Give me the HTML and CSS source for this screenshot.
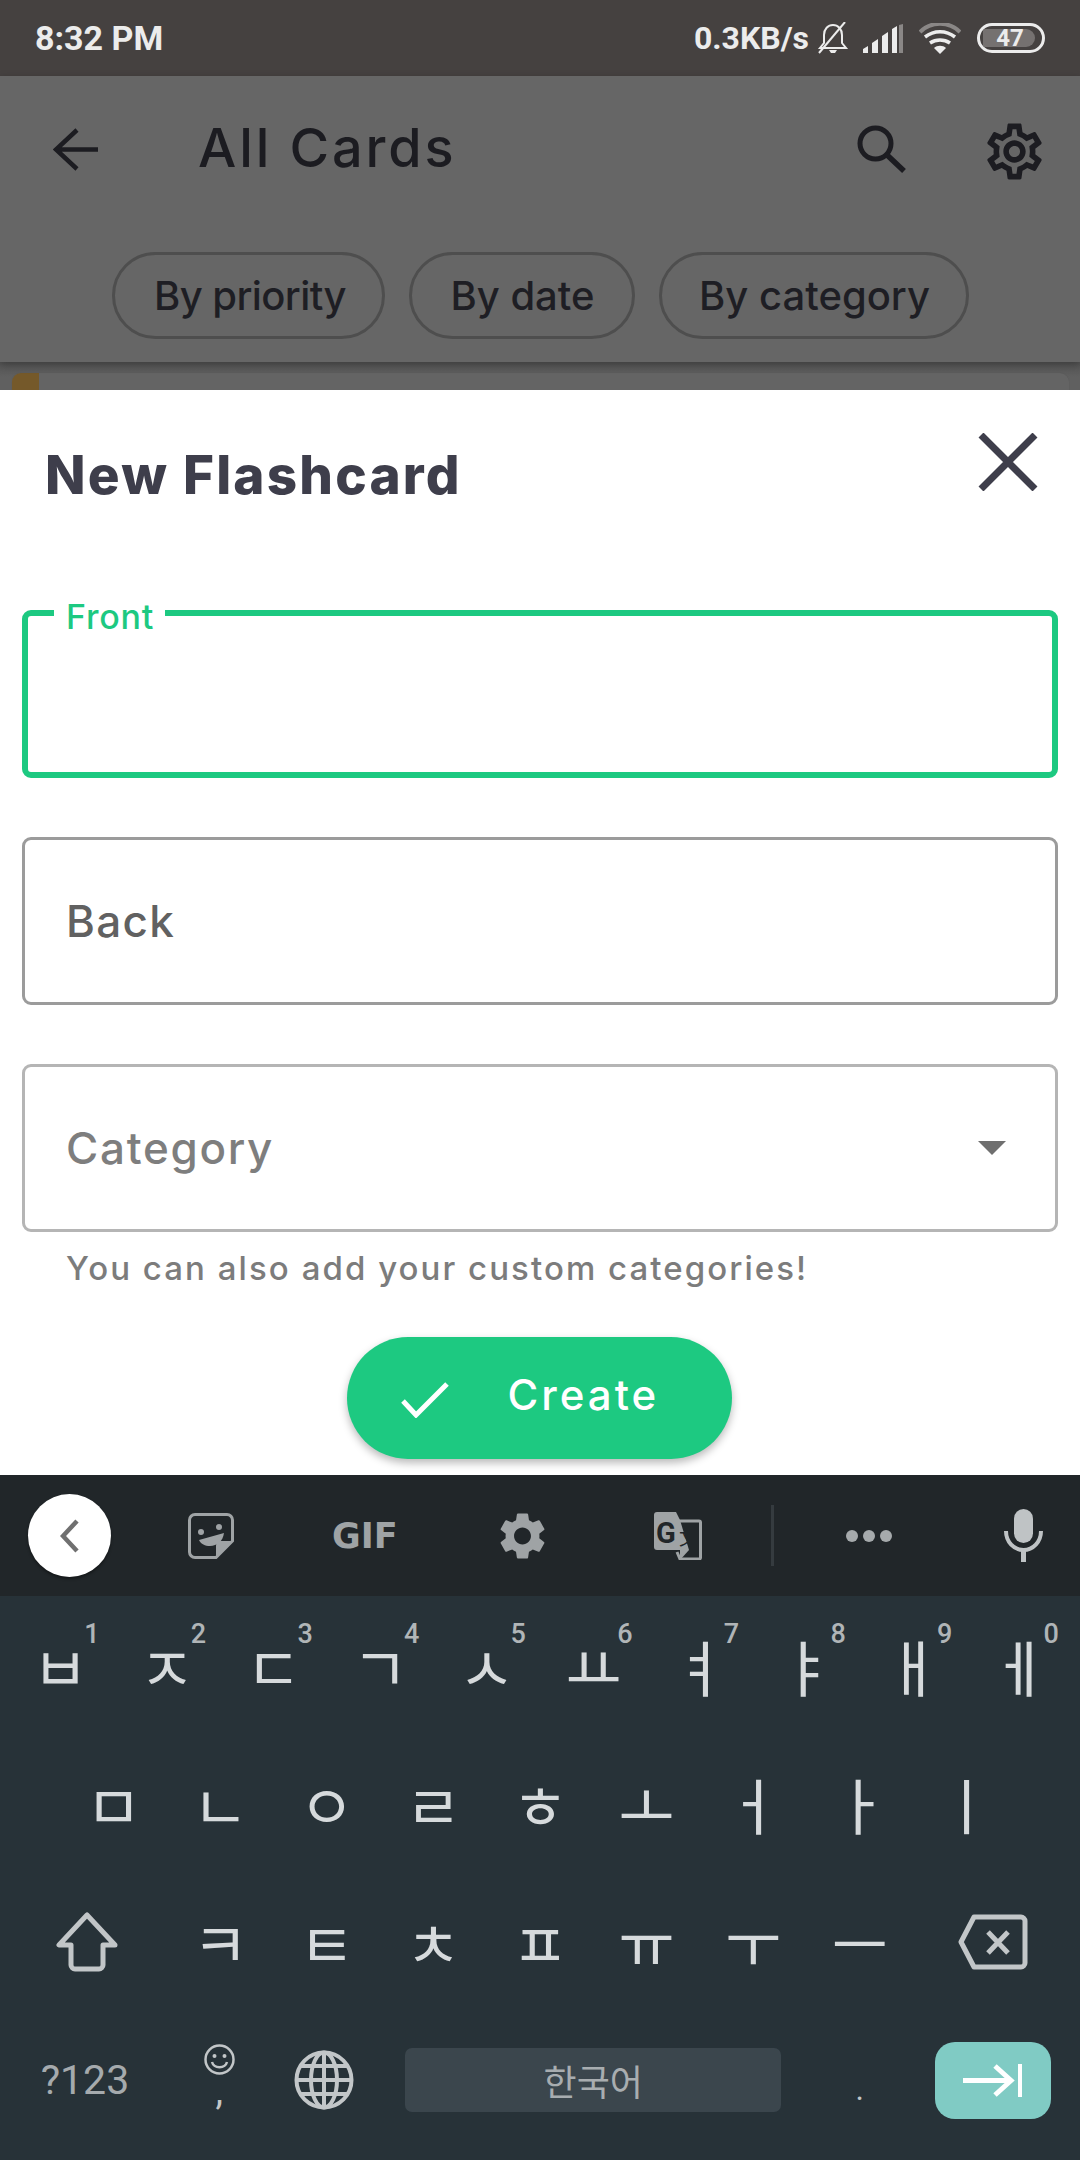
FILE: index.html
```html
<!DOCTYPE html>
<html lang="en">
<head>
<meta charset="utf-8">
<title>New Flashcard</title>
<link rel="stylesheet" href="styles.css">
</head>
<body>
<div class="screen">
  <header class="status">
    <span class="clock">8:32 PM</span>
    <div class="status-right">
      <span class="speed">0.3KB/s</span>
      <svg class="ic-bell" viewBox="0 0 32 32"><path d="M3 26h26l-4-5v-8c0-6-4-10-9-10s-9 4-9 10v8z" fill="none" stroke="#ececec" stroke-width="2"/><path d="M12 28h8l-2 3h-4z" fill="#ececec"/><path d="M2 31 28 0" stroke="#ececec" stroke-width="2"/></svg>
      <svg class="ic-signal" viewBox="0 0 40 29"><path d="M0 29v-4l5-3v7zM9 29v-10l6-4v14zM19 29v-17l6-4v21zM29 29v-24l5-3v27z" fill="#ececec"/><path d="M36 29v-28l4-1v29z" fill="#8a8786"/></svg>
      <svg class="ic-wifi" viewBox="0 0 42 31"><path d="M1 9c11-11 29-11 40 0" fill="none" stroke="#8a8786" stroke-width="4"/><path d="M6 14c9-7 21-7 30 0M11 20c6-4 14-4 20 0" fill="none" stroke="#ececec" stroke-width="3.500"/><path d="M21 31l-6-6c3-3 9-3 12 0z" fill="#ececec"/></svg>
      <div class="battery"><span class="battery-level"></span><span class="battery-num">47</span></div>
    </div>
  </header>

  <section class="appbar">
    <div class="appbar-top">
      <svg class="ic-back" viewBox="0 0 45 43"><path d="M24 2 3 21.500 24 41M3 21.500h42" fill="none" stroke="#1c1c21" stroke-width="4.500"/></svg>
      <h2 class="appbar-title">All Cards</h2>
      <svg class="ic-search" viewBox="0 0 49 48"><circle cx="18.500" cy="18.500" r="15.500" fill="none" stroke="#1c1c21" stroke-width="5"/><path d="M29 29 47 46" stroke="#1c1c21" stroke-width="5.500"/></svg>
      <svg class="ic-gear" viewBox="0 0 24 24"><path fill="#1c1c21" d="M19.430 12.980c.04-.32.07-.64.07-.98 0-.34-.03-.66-.07-.98l2.110-1.650c.19-.15.24-.42.12-.64l-2-3.460c-.09-.16-.26-.25-.44-.25-.06 0-.12.01-.17.03l-2.490 1c-.52-.4-1.080-.73-1.690-.98l-.38-2.650C14.460 2.180 14.250 2 14 2h-4c-.25 0-.46.18-.49.42l-.38 2.650c-.61.25-1.170.59-1.690.98l-2.490-1c-.06-.02-.12-.03-.18-.03-.17 0-.34.09-.43.25l-2 3.460c-.13.22-.07.49.12.64l2.110 1.650c-.04.32-.07.65-.07.98 0 .33.03.66.07.98l-2.110 1.650c-.19.15-.24.42-.12.64l2 3.460c.09.16.26.25.44.25.06 0 .12-.01.17-.03l2.490-1c.52.4 1.080.73 1.690.98l.38 2.650c.03.24.24.42.49.42h4c.25 0 .46-.18.49-.42l.38-2.650c.61-.25 1.170-.59 1.690-.98l2.490 1c.06.02.12.03.18.03.17 0 .34-.09.43-.25l2-3.460c.12-.22.07-.49-.12-.64l-2.110-1.650zm-1.980-1.710c.04.31.05.52.05.73 0 .21-.02.43-.05.73l-.14 1.130.89.7 1.080.84-.7 1.210-1.270-.51-1.040-.42-.9.68c-.43.32-.84.56-1.250.73l-1.060.43-.16 1.130-.2 1.350h-1.400l-.19-1.350-.16-1.130-1.060-.43c-.43-.18-.83-.41-1.230-.71l-.91-.7-1.060.43-1.270.51-.7-1.210 1.080-.84.89-.7-.14-1.130c-.03-.31-.05-.54-.05-.74s.02-.43.05-.73l.14-1.130-.89-.7-1.080-.84.7-1.210 1.270.51 1.040.42.9-.68c.43-.32.84-.56 1.250-.73l1.060-.43.16-1.130.2-1.350h1.390l.19 1.350.16 1.130 1.060.43c.43.18.83.41 1.230.71l.91.7 1.060-.43 1.270-.51.7 1.210-1.070.85-.89.7.14 1.130zM12 8c-2.210 0-4 1.790-4 4s1.790 4 4 4 4-1.790 4-4-1.790-4-4-4zm0 6c-1.100 0-2-.9-2-2s.9-2 2-2 2 .9 2 2-.9 2-2 2z"/></svg>
    </div>
    <div class="chips">
      <span class="chip chip-priority">By priority</span>
      <span class="chip chip-date">By date</span>
      <span class="chip chip-category">By category</span>
    </div>
  </section>

  <div class="peek"><div class="peek-card"><span class="peek-strip"></span></div></div>

  <main class="sheet">
    <div class="sheet-head">
      <h1 class="sheet-title">New Flashcard</h1>
      <svg class="ic-close" viewBox="0 0 60 58"><path d="M3 2 57 56M57 2 3 56" stroke="#3e3e4b" stroke-width="7"/></svg>
    </div>
    <div class="field field-active"><span class="field-label">Front</span></div>
    <div class="field field-back"><span class="field-text">Back</span></div>
    <div class="field field-select">
      <span class="field-text field-text-muted">Category</span>
      <span class="arrow"></span>
    </div>
    <p class="helper">You can also add your custom categories!</p>
    <div class="create">
      <svg class="ic-check" viewBox="0 0 48 36"><path d="M2 19 15 33 46 2" fill="none" stroke="#fff" stroke-width="5"/></svg>
      <span class="create-text">Create</span>
    </div>
  </main>

  <nav class="kb-tools">
    <div class="kb-collapse"><svg viewBox="0 0 20 34" class="ic-chev"><path d="M17 2 3 17 17 32" fill="none" stroke="#707070" stroke-width="4.500"/></svg></div>
    <svg class="ic-sticker" viewBox="0 0 46 46"><path d="M7 1.500h32c3 0 5.500 2.500 5.500 5.500v21L28 44.500H7c-3 0-5.500-2.500-5.500-5.500V7C1.500 4 4 1.500 7 1.500z" fill="none" stroke="#9fa3a5" stroke-width="3"/><path d="M44 28H33c-3 0-5 2-5 5v11z" fill="#9fa3a5"/><circle cx="13" cy="19" r="3" fill="#9fa3a5"/><circle cx="31" cy="14" r="3" fill="#9fa3a5"/><path d="M11 27l25-7c-1 8-7 13-14 13-5 0-9-2-11-6z" fill="#9fa3a5"/></svg>
    <span class="kb-gif">GIF</span>
    <svg class="ic-kbgear" viewBox="2 2 20 20"><path fill="#9fa3a5" d="M19.140 12.940c.04-.3.06-.61.06-.94 0-.32-.02-.64-.07-.94l2.030-1.580c.18-.14.23-.41.12-.61l-1.920-3.320c-.12-.22-.37-.29-.59-.22l-2.390.96c-.5-.38-1.030-.7-1.620-.94l-.36-2.540c-.04-.24-.24-.41-.48-.41h-3.840c-.24 0-.43.17-.47.41l-.36 2.540c-.59.24-1.130.57-1.620.94l-2.390-.96c-.22-.08-.47 0-.59.22L2.740 8.870c-.12.21-.08.47.12.61l2.030 1.580c-.05.3-.09.63-.09.94s.02.64.07.94l-2.030 1.580c-.18.14-.23.41-.12.61l1.920 3.320c.12.22.37.29.59.22l2.390-.96c.5.38 1.030.7 1.620.94l.36 2.540c.05.24.24.41.48.41h3.840c.24 0 .44-.17.47-.41l.36-2.540c.59-.24 1.130-.56 1.620-.94l2.390.96c.22.08.47 0 .59-.22l1.920-3.320c.12-.22.07-.47-.12-.61l-2.010-1.580zM12 15.600c-1.980 0-3.600-1.620-3.600-3.600s1.620-3.600 3.600-3.600 3.600 1.620 3.600 3.600-1.620 3.600-3.600 3.600z"/></svg>
    <svg class="ic-translate" viewBox="0 0 48 48"><path d="M23 9h22a1.500 1.500 0 0 1 1.500 1.500v35a1.500 1.500 0 0 1-1.500 1.500H26l-3-7" fill="none" stroke="#9fa3a5" stroke-width="3"/><path d="M3 0h19l4 8 9 30H3a3 3 0 0 1-3-3V3a3 3 0 0 1 3-3z" fill="#9fa3a5"/><path d="M26 48l9-10h-9z" fill="#9fa3a5"/><text x="2" y="31" class="tr-g">G</text><text x="25" y="33" class="tr-z">文</text></svg>
    <span class="kb-divider"></span>
    <div class="kb-dots"><span></span><span></span><span></span></div>
    <svg class="ic-mic" viewBox="0 0 39 53"><rect x="10" y="0" width="19" height="34" rx="9.500" fill="#bfc3c5"/><path d="M2 22c0 11 8 19 17.500 19S37 33 37 22" fill="none" stroke="#bfc3c5" stroke-width="4"/><rect x="17" y="40" width="5" height="13" fill="#bfc3c5"/></svg>
  </nav>

  <section class="kb">
    <div class="kb-row">
      <span class="key"><span class="glyph">ㅂ</span><span class="hint">1</span></span>
      <span class="key"><span class="glyph">ㅈ</span><span class="hint">2</span></span>
      <span class="key"><span class="glyph">ㄷ</span><span class="hint">3</span></span>
      <span class="key"><span class="glyph">ㄱ</span><span class="hint">4</span></span>
      <span class="key"><span class="glyph">ㅅ</span><span class="hint">5</span></span>
      <span class="key"><span class="glyph">ㅛ</span><span class="hint">6</span></span>
      <span class="key"><span class="glyph">ㅕ</span><span class="hint">7</span></span>
      <span class="key"><span class="glyph">ㅑ</span><span class="hint">8</span></span>
      <span class="key"><span class="glyph">ㅐ</span><span class="hint">9</span></span>
      <span class="key"><span class="glyph">ㅔ</span><span class="hint">0</span></span>
    </div>
    <div class="kb-row">
      <span class="key key-first-offset">ㅁ</span>
      <span class="key">ㄴ</span><span class="key">ㅇ</span><span class="key">ㄹ</span><span class="key">ㅎ</span>
      <span class="key">ㅗ</span><span class="key">ㅓ</span><span class="key">ㅏ</span><span class="key">ㅣ</span>
    </div>
    <div class="kb-row">
      <span class="key key-wide">
        <svg class="ic-shift" viewBox="0 0 62 60"><path d="M31 3 3 33h12v20c0 2 2 4 4 4h24c2 0 4-2 4-4V33h12z" fill="none" stroke="#c2c6c8" stroke-width="5" stroke-linejoin="round"/></svg>
      </span>
      <span class="key">ㅋ</span><span class="key">ㅌ</span><span class="key">ㅊ</span><span class="key">ㅍ</span>
      <span class="key">ㅠ</span><span class="key">ㅜ</span><span class="key">ㅡ</span>
      <span class="key key-wide">
        <svg class="ic-del" viewBox="0 0 70 56"><path d="M16 3h47c2 0 4 2 4 4v42c0 2-2 4-4 4H16L3 28z" fill="none" stroke="#c2c6c8" stroke-width="5" stroke-linejoin="round"/><path d="M30 18 50 39M50 18 30 39" stroke="#c2c6c8" stroke-width="5"/></svg>
      </span>
    </div>
    <div class="kb-row kb-row-bottom">
      <span class="key key-wide key-sym">?123</span>
      <span class="key key-comma">
        <svg class="ic-smile" viewBox="0 0 31 31"><circle cx="15.500" cy="15.500" r="14" fill="none" stroke="#c2c6c8" stroke-width="2.500"/><circle cx="10.500" cy="12" r="2" fill="#c2c6c8"/><circle cx="20.500" cy="12" r="2" fill="#c2c6c8"/><path d="M8 18c2 7 13 7 15 0" fill="none" stroke="#c2c6c8" stroke-width="2.500"/></svg>
        <span class="comma">,</span>
      </span>
      <span class="key key-globe">
        <svg class="ic-globe" viewBox="0 0 60 60"><g fill="none" stroke="#c2c6c8" stroke-width="4"><circle cx="30" cy="30" r="27.500"/><ellipse cx="30" cy="30" rx="13" ry="27.500"/><path d="M30 2v56M3 30h54M7 16h46M7 44h46"/></g></svg>
      </span>
      <span class="key key-space"><span class="space-bar">한국어</span></span>
      <span class="key key-period">.</span>
      <span class="key key-wide">
        <span class="enter"><svg class="ic-enter" viewBox="0 0 59 33"><path d="M0 16.500h48M32 2l16 14.500L32 31" fill="none" stroke="#fff" stroke-width="5"/><rect x="55" y="0" width="4" height="33" fill="#fff"/></svg></span>
      </span>
    </div>
  </section>
</div>
</body>
</html>
```

FILE: styles.css
```css
* { box-sizing: border-box; }
html, body { margin: 0; padding: 0; }
body { width: 1080px; height: 2160px; overflow: hidden; font-family: "Inter", "Noto Sans", sans-serif; }
h1, h2, p { margin: 0; font-weight: inherit; }
svg { display: block; flex: none; }

.screen { width: 1080px; height: 2160px; display: flex; flex-direction: column; background: #fff; }

/* status */
.status { height: 76px; flex: none; background: #454140; color: #ececec; font-family: "Roboto", sans-serif; font-weight: 700; font-size: 32px; display: flex; align-items: center; justify-content: space-between; padding: 0 35px 0 35px; }
.clock { font-size: 34px; }
.status-right { display: flex; align-items: center; }
.speed { margin-right: 8px; }
.ic-bell { width: 32px; height: 32px; margin-right: 14px; }
.ic-signal { width: 40px; height: 29px; margin-right: 16px; }
.ic-wifi { width: 42px; height: 31px; margin-right: 16px; }
.battery { position: relative; width: 68px; height: 30px; border: 3px solid #ececec; border-radius: 15px; overflow: hidden; display: flex; align-items: center; justify-content: center; font-size: 24px; font-weight: 700; }
.battery-level { position: absolute; left: 3px; top: 3px; bottom: 3px; width: 52px; background: #757170; border-radius: 2px 10px 10px 2px; }
.battery-num { position: relative; margin-left: -2px; }

/* app bar */
.appbar { height: 286px; flex: none; background: #666; color: #1c1c21; position: relative; z-index: 1; box-shadow: 0 3px 8px rgba(0,0,0,.28); }
.appbar-top { height: 142px; display: flex; align-items: center; padding-left: 53px; }
.ic-back { width: 45px; height: 43px; margin-top: 4px; }
.appbar-title { font-size: 54px; font-weight: 500; margin-left: 100px; flex: 1; letter-spacing: 2.900px; }
.ic-search { width: 49px; height: 48px; margin-top: 4px; }
.ic-gear { width: 67px; height: 67px; margin: 8px 32px 0 75px; }
.chips { display: flex; justify-content: center; gap: 24px; margin-top: 34px; }
.chip { height: 87px; border: 3px solid #4e4e4e; border-radius: 44px; display: flex; align-items: center; justify-content: center; font-size: 40px; font-weight: 500; color: #1e1e24; }
.chip-priority { width: 273px; padding-left: 4px; letter-spacing: -.6px; }
.chip-date { width: 226px; padding-left: 2px; }
.chip-category { width: 310px; padding-left: 2px; }

.peek { height: 28px; flex: none; background: linear-gradient(#555, #606060 55%); padding: 11px 11px 0 12px; overflow: hidden; }
.peek-card { height: 40px; background: #646464; border-radius: 9px 9px 0 0; overflow: hidden; box-shadow: 0 0 1px #555; }
.peek-strip { display: block; width: 27px; height: 100%; background: #75592a; }

/* sheet */
.sheet { height: 1085px; flex: none; background: #fff; padding: 0 22px; display: flex; flex-direction: column; }
.sheet-head { height: 170px; margin-bottom: 50px; display: flex; justify-content: space-between; flex: none; }
.sheet-title { font-size: 53px; font-weight: 800; letter-spacing: 2.200px; color: #3e3e4b; margin-left: 23px; align-self: center; }
.ic-close { width: 60px; height: 58px; margin: 43px 20px 0 0; }
.field { height: 168px; flex: none; border: 3px solid #9b9b9b; border-radius: 9px; display: flex; align-items: center; padding: 0 41px; position: relative; margin-bottom: 59px; }
.field-active { border: 6px solid #1dc981; }
.field-label { position: absolute; left: 26px; top: -14px; background: #fff; padding: 0 11px 0 12px; font-size: 34px; font-weight: 500; letter-spacing: .8px; line-height: 30px; color: #1dc981; }
.field-text { font-size: 44px; font-weight: 500; letter-spacing: 1.300px; color: #616161; }
.field-select { border-color: #b5b5b5; margin-bottom: 0; justify-content: space-between; padding-right: 49px; }
.field-text-muted { color: #7e7e7e; letter-spacing: 1.700px; }
.arrow { width: 0; height: 0; border-left: 14px solid transparent; border-right: 14px solid transparent; border-top: 14px solid #6f6f6f; }
.helper { margin: 16px 0 0 44px; font-size: 33px; font-weight: 500; line-height: 40px; color: #7c7c7c; letter-spacing: 2.050px; white-space: nowrap; }
.create { width: 385px; height: 122px; flex: none; margin: 49px 2px 0 0; align-self: center; background: #1dc981; border-radius: 61px; box-shadow: 0 4px 8px rgba(0,0,0,.28); display: flex; align-items: center; padding-left: 54px; }
.ic-check { width: 48px; height: 36px; margin-top: 4px; }
.create-text { margin: 0 0 8px 59px; font-size: 42px; font-weight: 500; color: #fff; letter-spacing: 3px; }

/* keyboard toolbar */
.kb-tools { height: 121px; flex: none; background: #212629; display: flex; align-items: center; padding-left: 28px; }
.kb-collapse { width: 83px; height: 83px; border-radius: 50%; background: #fff; display: flex; align-items: center; justify-content: center; box-shadow: 0 2px 3px rgba(0,0,0,.4); flex: none; }
.ic-chev { width: 20px; height: 34px; }
.ic-sticker { width: 46px; height: 46px; margin-left: 77px; }
.kb-gif { width: 63px; margin-left: 98px; font-family: "DejaVu Sans", sans-serif; font-weight: 700; font-size: 35px; letter-spacing: 0; color: #9fa3a5; white-space: nowrap; }
.ic-kbgear { width: 47px; height: 48px; margin-left: 104px; }
.ic-translate { width: 48px; height: 48px; margin-left: 108px; }
.tr-g { font-family: "Roboto", sans-serif; font-weight: 700; font-size: 29px; fill: #212629; }
.tr-z { font-family: "Noto Sans CJK SC", sans-serif; font-size: 19px; fill: #212629; }
.kb-divider { width: 3px; height: 61px; background: #353b3f; margin-left: 69px; }
.kb-dots { display: flex; gap: 5px; margin-left: 72px; }
.kb-dots span { width: 12px; height: 12px; border-radius: 50%; background: #a6aaac; }
.ic-mic { width: 39px; height: 53px; margin-left: 112px; }

/* keys */
.kb { flex: 1; background: #273238; padding: 1px 7px 0; display: flex; flex-direction: column; }
.kb-row { height: 138px; flex: none; display: grid; grid-template-columns: repeat(20, 53.3px); grid-template-rows: 138px; align-items: center; }
.key { grid-column: span 2; position: relative; display: flex; align-items: center; justify-content: center; color: #d6dadc; font-family: "Noto Sans CJK KR", sans-serif; font-weight: 400; font-size: 61px; line-height: 60px; }
.key-first-offset { grid-column: 2 / span 2; }
.key-wide { grid-column: span 3; }
.hint { position: absolute; right: 14px; top: -17px; font-family: "Roboto", sans-serif; font-weight: 500; font-size: 27px; line-height: 30px; color: #b0b5b7; }
.ic-shift { width: 62px; height: 60px; }
.ic-del { width: 70px; height: 56px; }
.key-sym { font-family: "Roboto", sans-serif; font-size: 41px; font-weight: 400; color: #a5aaad; padding-right: 4px; }
.key-comma { flex-direction: column; padding: 0 2px 10px 0; }
.ic-smile { width: 31px; height: 31px; }
.comma { font-family: "Roboto", sans-serif; font-size: 38px; font-weight: 400; line-height: 32px; color: #c2c6c8; }
.key-globe { padding-right: 5px; }
.ic-globe { width: 60px; height: 60px; }
.key-space { grid-column: span 8; }
.space-bar { width: 376px; height: 64px; border-radius: 7px; background: #3b464d; display: flex; align-items: center; justify-content: center; font-size: 36px; font-weight: 400; color: #a8adb0; }
.key-period { font-family: "Roboto", sans-serif; font-size: 32px; color: #c2c6c8; padding-top: 18px; }
.enter { width: 116px; height: 77px; border-radius: 20px; background: #80cbc4; display: flex; align-items: center; justify-content: center; }
.ic-enter { width: 59px; height: 33px; }
```
